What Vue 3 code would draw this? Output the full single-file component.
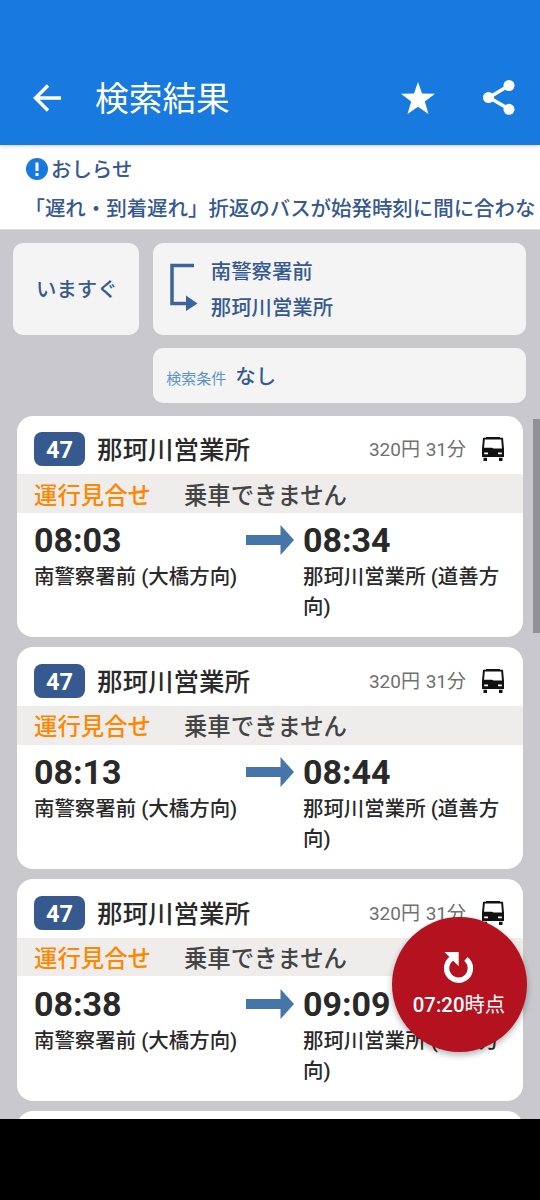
<template>
  <div class="screen">
    <header class="app-bar">
      <button class="icon-btn" aria-label="戻る">
        <svg class="icon-back" viewBox="0 0 28 28">
          <path d="M28 14H3M15 1.500 2.500 14 15 26.500" />
        </svg>
      </button>
      <h1>検索結果</h1>
      <button class="icon-btn" aria-label="お気に入り">
        <svg class="icon-star" viewBox="0 0 34 32">
          <path d="M17 0l4 11.6 13 .2-10.2 7.7L27.5 32 17 24.8 6.500 32l3.700-12.500L0 11.800l13-.2z" />
        </svg>
      </button>
      <button class="icon-btn" aria-label="共有">
        <svg class="icon-share" viewBox="0 0 32 35">
          <path d="M26 5.500 6 17.500l20 11.500" />
          <circle cx="26" cy="5.500" r="5.500" />
          <circle cx="5.500" cy="17.500" r="5.500" />
          <circle cx="26" cy="29.300" r="5.500" />
        </svg>
      </button>
    </header>

    <section class="notice">
      <div class="notice-title">
        <svg class="icon-info" viewBox="0 0 22 22">
          <circle cx="11" cy="11" r="11" />
          <path d="M9.500 4.500h3v8.500h-3zM9.500 15h3v3h-3z" />
        </svg>
        <span>おしらせ</span>
      </div>
      <p class="notice-text">「遅れ・到着遅れ」折返のバスが始発時刻に間に合わな</p>
    </section>

    <main class="content">
      <div class="search">
        <button class="panel when">いますぐ</button>
        <div class="panel route">
          <svg class="icon-route" viewBox="0 0 28 48">
            <path class="line" d="M24 2.500H2v38H17" />
            <path class="head" d="M16 32.500l11.500 8L16 48z" />
          </svg>
          <div class="route-stops">
            <span>南警察署前</span>
            <span>那珂川営業所</span>
          </div>
        </div>
        <div class="panel condition">
          <label>検索条件</label>
          <span>なし</span>
        </div>
      </div>

      <div class="results">
        <article v-for="bus in buses" :key="bus.departure" class="card">
          <div class="card-header">
            <span class="badge">47</span>
            <h2>那珂川営業所</h2>
            <span class="fare">320円 31分</span>
            <svg class="icon-bus" viewBox="0 0 22 24">
              <path fill-rule="evenodd" d="M4 0h14v.8h3L22 12v8H0V12L1 .8h3zM2.800 2.600 2 11.600h18l-.8-9zM2.200 15.500v1.700h3.800v-1.700zM16 15.500v1.700h3.800v-1.700z" />
              <path d="M1.500 10.800h8.500l2 1.500h-10.500zM1.500 20.800h3.500v3.200H1.500zM17 20.800h3.500v3.200H17z" />
            </svg>
          </div>
          <div class="status">
            <span class="status-label">運行見合せ</span>
            <span>乗車できません</span>
          </div>
          <div class="trip">
            <div class="stop">
              <time>{{ bus.departure }}</time>
              <p>南警察署前 (大橋方向)</p>
            </div>
            <svg class="icon-arrow" viewBox="0 0 48 30">
              <path d="M0 10h34.500V0L48 15 34.500 30V20H0z" />
            </svg>
            <div class="stop">
              <time>{{ bus.arrival }}</time>
              <p>那珂川営業所 (道善方向)</p>
            </div>
          </div>
        </article>
        <article class="card"></article>
      </div>

      <div class="scrollbar"></div>
      <button class="refresh">
        <svg class="icon-refresh" viewBox="0 0 30 31">
          <path class="ring" d="M8.500 6A11.900 11.900 0 1 0 21.900 7" />
          <path class="head" d="M.5 0h14.200v14.200z" />
        </svg>
        <span class="refresh-time">07:20<small>時点</small></span>
      </button>
    </main>

    <footer class="nav-bar"></footer>
  </div>
</template>

<script setup>
const buses = [
  { departure: '08:03', arrival: '08:34' },
  { departure: '08:13', arrival: '08:44' },
  { departure: '08:38', arrival: '09:09' }
]
</script>

<style>
body {
  margin: 0;
  background: #000;
}
</style>

<style scoped>
.screen {
  display: flex;
  flex-direction: column;
  width: 540px;
  height: 1200px;
  overflow: hidden;
  font-family: Roboto, "Noto Sans CJK JP", sans-serif;
  color: #292929;
}

.screen * {
  box-sizing: border-box;
}

button {
  margin: 0;
  padding: 0;
  border: none;
  background: none;
  font: inherit;
  color: inherit;
}

svg {
  display: block;
  flex-shrink: 0;
}

h1,
h2,
p {
  margin: 0;
}

.app-bar {
  display: flex;
  align-items: center;
  flex-shrink: 0;
  height: 145px;
  padding: 50px 25px 0 33px;
  background: #187adf;
  color: #fff;
  box-shadow: 0 1px 4px rgba(0, 0, 0, 0.2);
  z-index: 1;
}

.app-bar h1 {
  flex: 1;
  margin: 5px 0 0 34px;
  font-size: 33.7px;
  line-height: 48px;
  font-weight: 400;
}

.icon-back {
  width: 28px;
  height: 28px;
  fill: none;
  stroke: #fff;
  stroke-width: 3.4;
}

.icon-star {
  width: 34px;
  height: 32px;
  margin-right: 48px;
  fill: #fff;
}

.icon-share {
  width: 32px;
  height: 35px;
  fill: #fff;
}

.icon-share path {
  fill: none;
  stroke: #fff;
  stroke-width: 3.5;
}

.notice {
  flex-shrink: 0;
  height: 85px;
  padding: 10px 0 0 24.5px;
  border-bottom: 1px solid #ddd;
  background: #fff;
  color: #36598f;
  font-size: 20.45px;
  font-weight: 500;
}

.notice-title {
  display: flex;
  align-items: center;
  height: 28px;
  gap: 3px;
  padding-left: 1.5px;
}

.notice-title span {
  margin-top: -2px;
}

.icon-info {
  width: 22px;
  height: 22px;
  fill: #187adf;
}

.icon-info path {
  fill: #fff;
}

.notice-text {
  margin-top: 12px;
  line-height: 28px;
  white-space: nowrap;
}

.content {
  position: relative;
  flex: 1;
  min-height: 0;
  overflow: hidden;
  background: #c9c8cd;
}

.search {
  display: grid;
  grid-template-columns: 126px 373px;
  grid-template-rows: 91.5px 55px;
  gap: 13.5px;
  padding: 13px 0 0 13.3px;
  color: #36598f;
  font-size: 20.4px;
  font-weight: 500;
}

.panel {
  display: flex;
  align-items: center;
  border-radius: 10px;
  background: #f4f4f4;
}

.when {
  justify-content: center;
  padding: 0 0 2px 1px;
}

.route {
  padding-left: 17px;
}

.icon-route {
  width: 28px;
  height: 48px;
  margin-top: -3px;
}

.icon-route .line {
  fill: none;
  stroke: #3c639c;
  stroke-width: 3.5;
}

.icon-route .head {
  fill: #3c639c;
}

.route-stops {
  display: flex;
  flex-direction: column;
  margin: 3px 0 0 13px;
  line-height: 36.5px;
}

.condition {
  grid-column: 2;
  gap: 9px;
  padding: 0 0 1px 13.5px;
}

.condition label {
  margin-top: 4px;
  color: #5b93c7;
  font-size: 15px;
  font-weight: 400;
}

.results {
  display: flex;
  flex-direction: column;
  gap: 10.3px;
  padding: 12.6px 17px 0;
}

.card {
  height: 221.5px;
  border-radius: 16px;
  background: #fff;
}

.card-header {
  display: flex;
  align-items: center;
  height: 58.8px;
  padding: 8px 19px 0 17px;
}

.badge {
  width: 51px;
  height: 34px;
  border-radius: 8px;
  background: #36598f;
  color: #fff;
  font-size: 23.5px;
  font-weight: 700;
  line-height: 36px;
  text-align: center;
}

.card-header h2 {
  flex: 1;
  margin: 2px 0 0 12px;
  font-size: 25.5px;
  font-weight: 500;
  line-height: 34px;
}

.fare {
  margin: -3px 16px 0 0;
  color: #707070;
  font-size: 19px;
  word-spacing: 1px;
}

.icon-bus {
  width: 22px;
  height: 24px;
  fill: #111;
}

.status {
  display: flex;
  align-items: center;
  gap: 33px;
  height: 38.5px;
  padding-left: 17px;
  background: #eeedec;
  color: #444;
  font-size: 23.4px;
  font-weight: 500;
}

.status-label {
  color: #ff8700;
}

.trip {
  display: grid;
  grid-template-columns: 212px 57px 212px;
  padding: 8.3px 0 0 17px;
}

.stop time {
  display: block;
  font-size: 34px;
  font-weight: 700;
  line-height: 38px;
}

.stop p {
  margin-top: 3px;
  font-size: 20.45px;
  font-weight: 500;
  line-height: 30px;
}

.icon-arrow {
  width: 48px;
  height: 30px;
  margin-top: 4px;
  fill: #4575a9;
}

.scrollbar {
  position: absolute;
  top: 189px;
  right: 0;
  width: 7px;
  height: 214px;
  background: #929196;
}

.refresh {
  position: absolute;
  right: 13.5px;
  bottom: 67.5px;
  display: flex;
  flex-direction: column;
  align-items: center;
  width: 135px;
  height: 135px;
  padding-top: 35.5px;
  border-radius: 50%;
  background: #b5121f;
  box-shadow: 0 3px 6px rgba(0, 0, 0, 0.3);
  color: #fff;
  font-size: 20.4px;
  font-weight: 500;
}

.refresh-time {
  margin-top: 6.5px;
  line-height: 30px;
}

.refresh-time small {
  font-size: inherit;
  font-weight: 400;
}

.icon-refresh {
  width: 30px;
  height: 31px;
}

.icon-refresh .ring {
  fill: none;
  stroke: #fff;
  stroke-width: 5.4;
}

.icon-refresh .head {
  fill: #fff;
}

.nav-bar {
  flex-shrink: 0;
  height: 81px;
  background: #000;
}
</style>
